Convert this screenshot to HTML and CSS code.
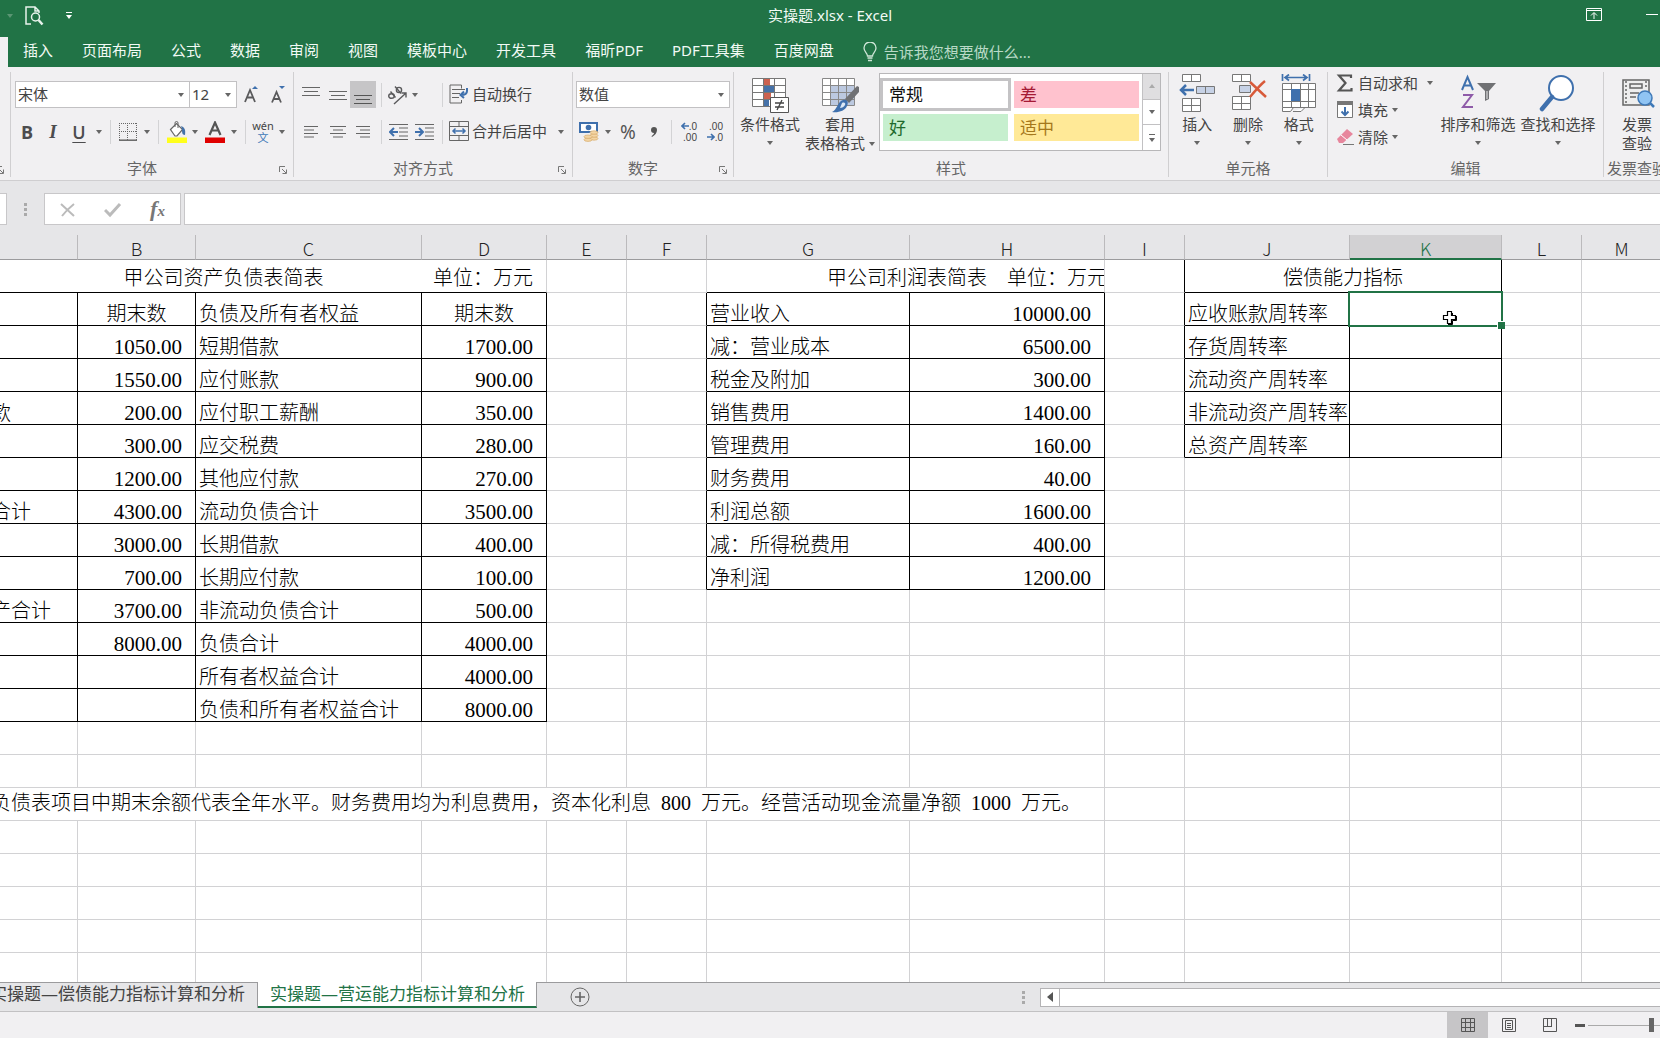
FILE: index.html
```html
<!DOCTYPE html>
<html lang="zh-CN">
<head>
<meta charset="utf-8">
<title>实操题.xlsx - Excel</title>
<link rel="stylesheet" href="styles.css">
</head>
<body>
<header class="titlebar">
  <div class="quick">
    <i class="caret dim"></i>
    <button class="plain" aria-label="打印预览"><svg width="20" height="20" viewBox="0 0 20 20" fill="none" stroke="#e8f3ec" stroke-width="1.5"><path d="M7 18H2V1h9l4 4v2M11 1v4h4"/><circle cx="11.500" cy="11" r="4"/><path d="M14.500 14l4 4.500" stroke-width="2.500"/></svg></button>
    <button class="plain more" aria-label="自定义快速访问工具栏"><i class="bar"></i><i class="caret light"></i></button>
  </div>
  <div class="doc">实操题.xlsx - Excel</div>
  <div class="winbtns">
    <button class="plain" aria-label="功能区显示选项"><svg width="16" height="13" viewBox="0 0 16 13" fill="none" stroke="#fff"><path d="M.5.5h15v12H.5zM.5 2.500h15M8 11V5M5 7.500L8 4.500l3 3"/></svg></button>
    <button class="plain" aria-label="最小化"><svg width="12" height="12" viewBox="0 0 12 12"><path d="M0 5.500h12" stroke="#fff"/></svg></button>
  </div>
</header>
<nav class="tabs">
  <span class="current"></span>
  <a href="#">插入</a><a href="#">页面布局</a><a href="#">公式</a><a href="#">数据</a><a href="#">审阅</a><a href="#">视图</a><a href="#">模板中心</a><a href="#">开发工具</a><a href="#">福昕PDF</a><a href="#">PDF工具集</a><a href="#">百度网盘</a>
  <label class="tell"><svg width="14" height="20" viewBox="0 0 14 20" fill="none" stroke="#cfe6d8" stroke-width="1.300"><path d="M4.500 14c0-3-3.500-4-3.500-8a6 6 0 0 1 12 0c0 4-3.500 5-3.500 8zM4.500 16h5M5 18.500h4"/></svg><input type="text" placeholder="告诉我您想要做什么..." aria-label="告诉我您想要做什么"></label>
</nav>

<section class="ribbon">
  <div class="group first"><div class="cap"><svg class="launch" width="8" height="8" viewBox="0 0 8 8"><path d="M.5 6V.5H6M3 3l4 4M7.500 3.500v4h-4" stroke="#777" fill="none"/></svg></div></div>

  <div class="group g-font">
    <div class="row font1">
      <label class="combo"><select aria-label="字体"><option>宋体</option></select><i class="caret"></i></label>
      <label class="combo"><select aria-label="字号"><option>12</option></select><i class="caret"></i></label>
      <button class="plain" aria-label="增大字号"><svg width="16" height="20" viewBox="0 0 16 20"><path d="M2 17L7 5l5 12M4 12.500h6" fill="none" stroke="#5a5a5c" stroke-width="1.800"/><path d="M9 4l3-3 3 3z" fill="#3f70ad"/></svg></button>
      <button class="plain" aria-label="减小字号"><svg width="16" height="20" viewBox="0 0 16 20"><path d="M2 17.500L6.500 7l4.500 10.500M3.500 14h6" fill="none" stroke="#5a5a5c" stroke-width="1.800"/><path d="M9 1h6l-3 3z" fill="#3f70ad"/></svg></button>
    </div>
    <div class="row font2">
      <button class="plain bold">B</button><button class="plain ital">I</button><button class="plain undl">U</button><i class="caret"></i><i class="sep"></i>
      <button class="plain" aria-label="边框"><svg width="18" height="18" viewBox="0 0 18 18" fill="none" stroke="#666"><path d="M.5 0v17M8.500 0v17M17.500 0v17M0 .5h18M0 8.500h18" stroke-dasharray="1 1"/><path d="M0 17.200h18" stroke-width="1.500"/></svg></button><i class="caret"></i><i class="sep"></i>
      <button class="plain" aria-label="填充颜色"><svg width="20" height="22" viewBox="0 0 20 22"><path d="M3.500 8.500l6-6 6 6-5.500 6.500H8z" fill="#fff" stroke="#666" stroke-width="1.200"/><path d="M8 6V2a1.500 1.500 0 0 1 3 0v5" fill="none" stroke="#666"/><path d="M14 5c3 1 5 3 4 9-3 0-3-3-3-6z" fill="#4472a8"/><path d="M0 16.500h20V22H0z" fill="#ffff1c"/></svg></button><i class="caret"></i>
      <button class="plain" aria-label="字体颜色"><svg width="20" height="22" viewBox="0 0 20 22"><path d="M4.500 14L10 1.500 15.500 14M6.500 9.500h7" fill="none" stroke="#555" stroke-width="2.200"/><path d="M0 16.500h20V22H0z" fill="#e00000"/></svg></button><i class="caret"></i><i class="sep"></i>
      <button class="plain pinyin"><span>wén</span><b>文</b></button><i class="caret"></i>
    </div>
    <div class="cap">字体<svg class="launch" width="8" height="8" viewBox="0 0 8 8"><path d="M.5 6V.5H6M3 3l4 4M7.500 3.500v4h-4" stroke="#777" fill="none"/></svg></div>
  </div>

  <div class="group g-align">
    <div class="row al1">
      <button class="plain" aria-label="顶端对齐"><svg width="18" height="24" viewBox="0 0 18 24"><path d="M0 4.500h18M2 8.500h14M0 12.500h18" stroke="#666"/></svg></button>
      <button class="plain" aria-label="垂直居中"><svg width="18" height="24" viewBox="0 0 18 24"><path d="M0 8.500h18M2 12.500h14M0 16.500h18" stroke="#666"/></svg></button>
      <button class="plain on" aria-label="底端对齐"><svg width="18" height="24" viewBox="0 0 18 24"><path d="M0 12.500h18M2 16.500h14M0 20.500h18" stroke="#555"/></svg></button>
      <i class="sep"></i>
      <button class="plain" aria-label="方向"><svg width="20" height="20" viewBox="0 0 20 20" fill="none" stroke="#5a5a5c" stroke-width="1.400"><ellipse cx="4.500" cy="11" rx="2.800" ry="2.300"/><path d="M3.500 6.500l5 6M8 1.500l6 7"/><ellipse cx="12" cy="5" rx="2.600" ry="2.600"/><path d="M7 19L18.500 8.500M14.500 8h4.500v4.500"/></svg></button><i class="caret"></i><i></i><i class="sep"></i>
      <button class="plain txt"><svg width="20" height="20" viewBox="0 0 20 20" fill="none" stroke="#666"><path d="M12.500 4.500V1H1v18h11.500v-3M3 5.500h13M3 9.500h8M3 13.500h7"/><path d="M18 4v3c0 3-2 4-6 4M15 7.500L11.500 11l3.500 3" stroke="#3f70ad" stroke-width="2"/></svg>自动换行</button>
    </div>
    <div class="row al2">
      <button class="plain" aria-label="左对齐"><svg width="16" height="14" viewBox="0 0 16 14"><path d="M1 1.500h14M1 5h10M1 8.500h14M1 12h10" stroke="#666"/></svg></button>
      <button class="plain" aria-label="居中"><svg width="16" height="14" viewBox="0 0 16 14"><path d="M0 1.500h16M3 5h10M0 8.500h16M3 12h10" stroke="#666"/></svg></button>
      <button class="plain" aria-label="右对齐"><svg width="16" height="14" viewBox="0 0 16 14"><path d="M1 1.500h14M5 5h10M1 8.500h14M5 12h10" stroke="#666"/></svg></button>
      <i class="sep"></i>
      <button class="plain" aria-label="减少缩进"><svg width="19" height="18" viewBox="0 0 19 18"><path d="M0 1.500h19M10 5h9M10 9h9M10 13h9M0 16.500h19" stroke="#666"/><path d="M9 9H2M5 5L1 9l4 4" fill="none" stroke="#3f70ad" stroke-width="2"/></svg></button>
      <button class="plain" aria-label="增加缩进"><svg width="19" height="18" viewBox="0 0 19 18"><path d="M0 1.500h19M10 5h9M10 9h9M10 13h9M0 16.500h19" stroke="#666"/><path d="M0 9h7M4 5l4 4-4 4" fill="none" stroke="#3f70ad" stroke-width="2"/></svg></button>
      <i class="sep"></i>
      <button class="plain txt"><svg width="20" height="20" viewBox="0 0 20 20" fill="none" stroke="#666"><path d="M.5.500h19v19H.5zM.5 5.500h19M.5 14.500h19M10 .5v5M10 14.500v5"/><path d="M4 10h12M6.500 7.500L4 10l2.500 2.500M13.500 7.500L16 10l-2.500 2.500" stroke="#3f70ad" stroke-width="1.500"/></svg>合并后居中</button><i class="caret"></i>
    </div>
    <div class="cap">对齐方式<svg class="launch" width="8" height="8" viewBox="0 0 8 8"><path d="M.5 6V.5H6M3 3l4 4M7.500 3.500v4h-4" stroke="#777" fill="none"/></svg></div>
  </div>

  <div class="group g-num">
    <div class="row num1"><label class="combo"><select aria-label="数字格式"><option>数值</option></select><i class="caret"></i></label></div>
    <div class="row num2">
      <button class="plain" aria-label="会计数字格式"><svg width="20" height="21" viewBox="0 0 20 21"><path d="M1 2h17v9H1z" fill="#fff" stroke="#3f70ad" stroke-width="2"/><circle cx="9.500" cy="6.500" r="2.800" fill="#3f70ad"/><g fill="#f3d5a5" stroke="#d8ac6c" stroke-width=".7"><ellipse cx="15" cy="17.500" rx="4" ry="1.700"/><ellipse cx="15" cy="14.500" rx="4" ry="1.700"/><ellipse cx="15" cy="11.500" rx="4" ry="1.700"/><ellipse cx="9" cy="18.700" rx="4" ry="1.700"/><ellipse cx="9" cy="15.700" rx="4" ry="1.700"/></g></svg></button><i class="caret"></i>
      <button class="plain pct">%</button><button class="plain comma" aria-label="千位分隔样式"><svg width="8" height="12" viewBox="0 0 8 12"><path d="M4 1a3 3 0 0 1 3 3c0 3-2 5-5 7l-.5-.8C3 9 4 8 4 7a3 3 0 0 1 0-6z" fill="#555"/></svg></button><i class="sep"></i>
      <button class="plain dec"><span><svg width="8" height="8" viewBox="0 0 8 8"><path d="M8 4H1.500M4 1L1 4l3 3" fill="none" stroke="#3f70ad" stroke-width="1.600"/></svg>.0</span><span>.00</span></button>
      <button class="plain dec"><span>.00</span><span><svg width="8" height="8" viewBox="0 0 8 8"><path d="M0 4h6.500M4 1l3 3-3 3" fill="none" stroke="#3f70ad" stroke-width="1.600"/></svg>.0</span></button>
    </div>
    <div class="cap">数字<svg class="launch" width="8" height="8" viewBox="0 0 8 8"><path d="M.5 6V.5H6M3 3l4 4M7.500 3.500v4h-4" stroke="#777" fill="none"/></svg></div>
  </div>

  <div class="group g-style">
    <div class="body">
      <button class="plain big cond"><svg width="38" height="38" viewBox="0 0 38 38"><path d="M1.500 3.500h33v28h-33z" fill="#fff"/><path d="M12 3h7v7h-7zM12 17h8v7h-8z" fill="#cc6250"/><path d="M12 10h11v7H12zM12 24h6v7h-6z" fill="#4672a9"/><path d="M1.500 3.500h33v28h-33zM1.500 10.500h33M1.500 17.500h33M1.500 24.500h33M12.500 3v28M23.500 3v28" fill="none" stroke="#777"/><path d="M19.500 22.500h18v15h-18z" fill="#fff" stroke="#555"/><path d="M24 28h9M24 32h9M31 25l-5 10" stroke="#444" stroke-width="1.300"/></svg><span>条件格式</span><i class="caret"></i></button>
      <button class="plain big two"><svg width="38" height="38" viewBox="0 0 38 38"><path d="M1.500 3.500h32v27h-32z" fill="#fff"/><path d="M9 10h25v20H9z" fill="#bcc9e0"/><path d="M1.500 3.500h32v27h-32zM1.500 10.500h32M1.500 17.500h32M1.500 24.500h32M9.500 3v28M17.500 3v28M25.500 3v28" fill="none" stroke="#888"/><path d="M36 11l2 1v5L28 28l-4-4z" fill="#707174"/><path d="M22 25c4-1 6 2 4 6-2 5-9 7-15 6 5-2 6-11 11-12z" fill="#3f70ad"/><path d="M21 28c2-1 4 0 3 2s-3 3-5 3z" fill="#dbe7f5"/></svg><span>套用</span><span class="drop">表格格式<i class="caret"></i></span></button>
      <div class="gallery">
        <div class="swatches"><button class="sw normal">常规</button><button class="sw bad">差</button><button class="sw good">好</button><button class="sw neutral">适中</button></div>
        <div class="gscroll"><button class="off" aria-label="上一行"><i class="caret up"></i></button><button aria-label="下一行"><i class="caret"></i></button><button aria-label="其他"><i class="bar dark"></i><i class="caret"></i></button></div>
      </div>
    </div>
    <div class="cap wide">样式</div>
  </div>

  <div class="group g-cells">
    <div class="body">
      <button class="plain big"><svg width="38" height="38" viewBox="0 0 38 38" fill="#fff" stroke="#777"><path d="M4.500.5h18v7h-18zM13.500.5v7M4.500 24.500h18v13h-18zM4.500 31.500h18M13.500 24.500v13"/><path d="M18.500 12.500h18v7h-18zM27.500 12.500v7" fill="#c7d2e6"/><path d="M16 16H3M8 11l-5 5 5 5" fill="none" stroke="#3f70ad" stroke-width="2.500"/></svg><span>插入</span><i class="caret"></i></button>
      <button class="plain big"><svg width="38" height="38" viewBox="0 0 38 38" fill="#fff" stroke="#777"><path d="M3.500.5h18v7h-18zM12.500.5v7M3.500 22.500h18v13h-18zM3.500 29.500h18M12.500 22.500v13"/><path d="M10.500 11.500h11v7h-11z" fill="#c7d2e6"/><path d="M21 8l16 15M36 7C31 11 26 17 21 23" fill="none" stroke="#d85a3a" stroke-width="2.500"/></svg><span>删除</span><i class="caret"></i></button>
      <button class="plain big"><svg width="38" height="38" viewBox="0 0 38 38" fill="#fff" stroke="#777"><path d="M2.500 9.500h33v24h-33zM2.500 15.500h33M2.500 27.500h33M11.500 9v24M20.500 9v24M28.500 9v24M2.500 33.500v4h8l3-4M13 37.500h8l4-4"/><path d="M11 15h9v12h-9z" fill="#3f70ad" stroke="none"/><path d="M2.500 0v7M29.500 0v7M5 3.500h22M9 .5L5 3.500l4 3M23 .5l4 3-4 3" fill="none" stroke="#3f70ad" stroke-width="1.700"/></svg><span>格式</span><i class="caret"></i></button>
    </div>
    <div class="cap wide">单元格</div>
  </div>

  <div class="group g-edit">
    <div class="body">
      <div class="stack">
        <button class="plain line"><svg width="18" height="18" viewBox="0 0 18 18"><path d="M15 4V1.500H3L9.500 9 3 16.500h12.500V14" fill="none" stroke="#555" stroke-width="2.200"/></svg>自动求和<i class="caret far"></i></button>
        <button class="plain line"><svg width="18" height="18" viewBox="0 0 18 18"><path d="M1.500 1.500h15v15h-15z" fill="#fff" stroke="#777"/><path d="M1 0h16v4H1z" fill="#777"/><path d="M9 6v8M5.500 10.500L9 14l3.500-3.500" fill="none" stroke="#3f70ad" stroke-width="2"/></svg>填充<i class="caret"></i></button>
        <button class="plain line"><svg width="18" height="18" viewBox="0 0 18 18"><path d="M1 11L11 1l6 5L7 15H3z" fill="#e7869d"/><path d="M5 7l6 5" stroke="#fff"/><path d="M7 16.500h11" stroke="#777"/></svg>清除<i class="caret"></i></button>
      </div>
      <button class="plain big"><svg width="38" height="38" viewBox="0 0 38 38" fill="none"><path d="M3 16L8.500 3 14 16M5 11.500h7" stroke="#3f70ad" stroke-width="2"/><path d="M4 21h9L4 33h10" stroke="#8e5ba8" stroke-width="2"/><path d="M18 9h19l-7 8v8l-4 2V17z" fill="#707174"/><path d="M28 17v8" stroke="#eee"/></svg><span>排序和筛选</span><i class="caret"></i></button>
      <button class="plain big"><svg width="38" height="38" viewBox="0 0 38 38" fill="none" stroke="#3f70ad"><circle cx="22" cy="14" r="12" fill="#fff" stroke-width="2"/><path d="M13 23L3 35" stroke-width="4.500" stroke-linecap="round"/></svg><span>查找和选择</span><i class="caret"></i></button>
    </div>
    <div class="cap wide">编辑</div>
  </div>

  <div class="group g-inv">
    <div class="body">
      <button class="plain big"><svg width="38" height="38" viewBox="0 0 38 38" fill="none" stroke="#666" stroke-width="1.500"><path d="M5 6h26v25H5z" fill="#eee"/><path d="M8 7v23M28 7v8" stroke-dasharray="2 2"/><path d="M12 10h12v4H12zM12 19h9M12 23h6"/><circle cx="27" cy="24" r="7" fill="#90c4f3" stroke="#3f79b8"/><path d="M32 29l4 4" stroke="#3f79b8" stroke-width="2.500"/></svg><span>发票</span><span>查验</span></button>
    </div>
    <div class="cap wide">发票查验</div>
  </div>
</section>

<section class="formula">
  <div class="namebox"></div>
  <div class="dots"><i></i><i></i><i></i></div>
  <div class="fxbox">
    <button class="plain" aria-label="取消"><svg width="16" height="16" viewBox="0 0 16 16"><path d="M1 2l13 12M14 2C9 6 5 10 2 14" fill="none" stroke="#bbb" stroke-width="2"/></svg></button>
    <button class="plain" aria-label="输入"><svg width="18" height="16" viewBox="0 0 18 16"><path d="M1 8l5 5L16 2" fill="none" stroke="#bbb" stroke-width="3"/></svg></button>
    <button class="plain fx">f<small>x</small></button>
  </div>
  <input class="finput" type="text" aria-label="编辑栏">
</section>

<main class="sheet">
<table>
<colgroup><col class="ca"><col class="cb"><col class="cc"><col class="cd"><col class="ce"><col class="ce"><col class="cg"><col class="ch"><col class="ce"><col class="cj"><col class="ck"><col class="ce"><col></colgroup>
<thead><tr><th scope="col"></th><th scope="col">B</th><th scope="col">C</th><th scope="col">D</th><th scope="col">E</th><th scope="col">F</th><th scope="col">G</th><th scope="col">H</th><th scope="col">I</th><th scope="col">J</th><th scope="col" class="sel">K</th><th scope="col">L</th><th scope="col">M</th></tr></thead>
<tbody>
<tr class="mid head"><td colspan="3" class="kb nr title">甲公司资产负债表简表</td><td class="kb n">单位：万元</td><td></td><td></td><td colspan="2" class="kb profit">甲公司利润表简表　单位：万元</td><td class="kr"></td><td colspan="2" class="k c">偿债能力指标</td><td></td><td></td></tr>
<tr><td class="k"></td><td class="k c">期末数</td><td class="k">负债及所有者权益</td><td class="k c">期末数</td><td></td><td class="kr"></td><td class="k">营业收入</td><td class="k n">10000.00</td><td class="kr"></td><td class="k">应收账款周转率</td><td class="k active"><svg class="cursor" width="16" height="16" viewBox="0 0 16 16"><path d="M5.500 1.500h4v4h4v4h-4v4h-4v-4h-4v-4h4z" fill="#fff" stroke="#000" stroke-width="1.200"/><path d="M10.500 3v2M14.500 6v4.500h-4v4H6" fill="none" stroke="#000"/></svg></td><td></td><td></td></tr>
<tr><td class="k"></td><td class="k n">1050.00</td><td class="k">短期借款</td><td class="k n">1700.00</td><td></td><td class="kr"></td><td class="k">减：营业成本</td><td class="k n">6500.00</td><td class="kr"></td><td class="k">存货周转率</td><td class="k"></td><td></td><td></td></tr>
<tr><td class="k"></td><td class="k n">1550.00</td><td class="k">应付账款</td><td class="k n">900.00</td><td></td><td class="kr"></td><td class="k">税金及附加</td><td class="k n">300.00</td><td class="kr"></td><td class="k">流动资产周转率</td><td class="k"></td><td></td><td></td></tr>
<tr><td class="k">款</td><td class="k n">200.00</td><td class="k">应付职工薪酬</td><td class="k n">350.00</td><td></td><td class="kr"></td><td class="k">销售费用</td><td class="k n">1400.00</td><td class="kr"></td><td class="k">非流动资产周转率</td><td class="k"></td><td></td><td></td></tr>
<tr><td class="k"></td><td class="k n">300.00</td><td class="k">应交税费</td><td class="k n">280.00</td><td></td><td class="kr"></td><td class="k">管理费用</td><td class="k n">160.00</td><td class="kr"></td><td class="k">总资产周转率</td><td class="k"></td><td></td><td></td></tr>
<tr><td class="k"></td><td class="k n">1200.00</td><td class="k">其他应付款</td><td class="k n">270.00</td><td></td><td class="kr"></td><td class="k">财务费用</td><td class="k n">40.00</td><td></td><td></td><td></td><td></td><td></td></tr>
<tr><td class="k">合计</td><td class="k n">4300.00</td><td class="k">流动负债合计</td><td class="k n">3500.00</td><td></td><td class="kr"></td><td class="k">利润总额</td><td class="k n">1600.00</td><td></td><td></td><td></td><td></td><td></td></tr>
<tr><td class="k"></td><td class="k n">3000.00</td><td class="k">长期借款</td><td class="k n">400.00</td><td></td><td class="kr"></td><td class="k">减：所得税费用</td><td class="k n">400.00</td><td></td><td></td><td></td><td></td><td></td></tr>
<tr><td class="k"></td><td class="k n">700.00</td><td class="k">长期应付款</td><td class="k n">100.00</td><td></td><td class="kr"></td><td class="k">净利润</td><td class="k n">1200.00</td><td></td><td></td><td></td><td></td><td></td></tr>
<tr><td class="k">产合计</td><td class="k n">3700.00</td><td class="k">非流动负债合计</td><td class="k n">500.00</td><td></td><td></td><td></td><td></td><td></td><td></td><td></td><td></td><td></td></tr>
<tr><td class="k"></td><td class="k n">8000.00</td><td class="k">负债合计</td><td class="k n">4000.00</td><td></td><td></td><td></td><td></td><td></td><td></td><td></td><td></td><td></td></tr>
<tr><td class="k"></td><td class="k"></td><td class="k">所有者权益合计</td><td class="k n">4000.00</td><td></td><td></td><td></td><td></td><td></td><td></td><td></td><td></td><td></td></tr>
<tr><td class="k"></td><td class="k"></td><td class="k">负债和所有者权益合计</td><td class="k n">8000.00</td><td></td><td></td><td></td><td></td><td></td><td></td><td></td><td></td><td></td></tr>
<tr><td></td><td></td><td></td><td></td><td></td><td></td><td></td><td></td><td></td><td></td><td></td><td></td><td></td></tr>
<tr><td></td><td></td><td></td><td></td><td></td><td></td><td></td><td></td><td></td><td></td><td></td><td></td><td></td></tr>
<tr class="mid note"><td colspan="8">负债表项目中期末余额代表全年水平。财务费用均为利息费用，资本化利息&nbsp; 800&nbsp; 万元。经营活动现金流量净额&nbsp; 1000&nbsp; 万元。</td><td></td><td></td><td></td><td></td><td></td></tr>
<tr><td></td><td></td><td></td><td></td><td></td><td></td><td></td><td></td><td></td><td></td><td></td><td></td><td></td></tr>
<tr><td></td><td></td><td></td><td></td><td></td><td></td><td></td><td></td><td></td><td></td><td></td><td></td><td></td></tr>
<tr><td></td><td></td><td></td><td></td><td></td><td></td><td></td><td></td><td></td><td></td><td></td><td></td><td></td></tr>
<tr><td></td><td></td><td></td><td></td><td></td><td></td><td></td><td></td><td></td><td></td><td></td><td></td><td></td></tr>
<tr><td></td><td></td><td></td><td></td><td></td><td></td><td></td><td></td><td></td><td></td><td></td><td></td><td></td></tr>
</tbody>
</table>
</main>

<footer>
  <div class="sheettabs">
    <div class="leftpart">
      <button class="stab"><span>实操题—偿债能力指标计算和分析</span></button>
      <button class="stab cur">实操题—营运能力指标计算和分析</button>
      <button class="plain add" aria-label="新工作表"><svg width="20" height="20" viewBox="0 0 20 20" fill="none" stroke="#666"><circle cx="10" cy="10" r="9"/><path d="M10 5v10M5 10h10" stroke-width="1.600"/></svg></button>
    </div>
    <div class="rightpart">
      <div class="dots"><i></i><i></i><i></i></div>
      <div class="hscroll"><button aria-label="向左滚动"><svg width="6" height="10" viewBox="0 0 6 10"><path d="M6 0v10L0 5z" fill="#555"/></svg></button></div>
    </div>
  </div>
  <div class="status">
    <button class="plain view on" aria-label="普通"><svg width="14" height="14" viewBox="0 0 14 14" fill="none" stroke="#555"><path d="M.5.5h13v13H.5zM.5 4.500h13M.5 9.500h13M4.500.5v13M9.500.5v13"/></svg></button>
    <button class="plain view" aria-label="页面布局"><svg width="14" height="14" viewBox="0 0 14 14" fill="none" stroke="#555"><path d="M.5.5h13v13H.5zM3.500 2.500h7v9h-7zM5 5.500h4M5 7.500h4M5 9.500h4"/></svg></button>
    <button class="plain view" aria-label="分页预览"><svg width="14" height="14" viewBox="0 0 14 14" fill="none" stroke="#555"><path d="M.5.5h13v13H.5zM4.500.5v8M8.500.5v8M0 8.500h9"/></svg></button>
    <button class="plain minus" aria-label="缩小"><svg width="10" height="3" viewBox="0 0 10 3"><path d="M0 0h10v3H0z" fill="#555"/></svg></button>
    <input class="zoom" type="range" min="0" max="100" value="50" aria-label="缩放">
  </div>
</footer>
</body>
</html>
```
FILE: styles.css
```css
* { box-sizing: border-box; }
:root {
  --green: #217346;
  --ui: "Noto Sans", "Noto Sans CJK SC", sans-serif;
  --line: #d2d2d4;
  --chrome: #e6e6e8;
  --pale: #f1f0f2;
}
body {
  margin: 0;
  height: 100vh;
  display: flex;
  flex-direction: column;
  overflow: hidden;
  background: #fff;
  color: #444;
  font: 15px/20px var(--ui);
}
button, input, select { font: inherit; color: inherit; }
.plain {
  border: 0;
  padding: 0;
  background: none;
  display: flex;
  align-items: center;
  justify-content: center;
  white-space: nowrap;
}
svg { flex: none; display: block; }
.caret {
  width: 0;
  height: 0;
  flex: none;
  border: 3px solid transparent;
  border-top: 4px solid #666;
  border-bottom: 0;
  justify-self: center;
  align-self: center;
}
.caret.up { border-top: 0; border-bottom: 4px solid #aaa; }
.caret.light { border-top-color: #fff; }
.caret.dim { border-top-color: #5b9674; }
.bar { width: 6px; height: 1px; background: #fff; }
.bar.dark { background: #666; }

/* title bar */
.titlebar {
  height: 37px;
  flex: none;
  display: grid;
  grid-template-columns: 1fr auto 1fr;
  align-items: center;
  background: var(--green);
  color: #f2faf5;
}
.quick { display: flex; align-items: center; padding-left: 7px; padding-bottom: 6px; }
.quick .plain { margin-left: 11px; }
.quick .more { flex-direction: column; gap: 2px; margin-left: 22px; }
.doc { padding-bottom: 8px; }
.winbtns { display: flex; justify-content: flex-end; gap: 44px; align-items: center; padding: 0 2px 8px 0; }

/* ribbon tabs */
.tabs {
  height: 30px;
  flex: none;
  display: flex;
  align-items: center;
  gap: 29px;
  background: var(--green);
  color: #f2faf5;
  white-space: nowrap;
}
.tabs a { color: inherit; text-decoration: none; padding-bottom: 4px; }
.tabs .current { width: 8px; height: 30px; background: var(--pale); margin-right: -14px; }
.tell { display: flex; align-items: center; gap: 7px; }
.tell input { border: 0; padding: 0 0 1px; width: 180px; background: none; }
.tell input::placeholder { color: #b9dac7; opacity: 1; }

/* ribbon */
.ribbon {
  height: 114px;
  flex: none;
  display: flex;
  padding: 5px 0 3px;
  overflow: hidden;
  background: var(--pale);
  border-bottom: 1px solid #cfced0;
}
.group {
  flex: none;
  display: flex;
  flex-direction: column;
  padding: 9px 3px 0;
  border-right: 1px solid #d0cfd1;
}
.first { width: 11px; padding: 0; }
.g-font { width: 283px; }
.g-align { width: 279px; }
.g-num { width: 161px; }
.g-style { width: 435px; }
.g-cells { width: 159px; }
.g-edit { width: 276px; }
.g-inv { width: 120px; border: 0; }
.cap {
  margin-top: auto;
  display: flex;
  align-items: center;
  justify-content: center;
  position: relative;
  height: 18px;
  padding-right: 20px;
  color: #666;
  white-space: nowrap;
}
.cap.wide, .first .cap { padding: 0; }
.g-inv .cap { justify-content: flex-start; }
.launch { position: absolute; right: 3px; bottom: 3px; }
.first .launch { right: 6px; }
.row { display: grid; height: 27px; margin-bottom: 10px; }
.row > .plain { height: 27px; }
.sep { width: 1px; height: 24px; background: #d3d3d5; justify-self: center; align-self: center; }
.font1 { grid-template-columns: 176px 47px 28px 25px; }
.font2 { grid-template-columns: 26px 26px 26px 14px 8px 28px 10px 12px 26px 10px 30px 8px 14px 22px 16px; }
.al1 { grid-template-columns: 28px 25px 26px 10px 22px 14px 15px 10px 1fr; }
.al2 { grid-template-columns: 28px 25px 26px 10px 25px 26px 10px 102px 24px; }
.num1 { grid-template-columns: 1fr; }
.num2 { grid-template-columns: 26px 12px 28px 24px 10px 26px 26px; }
.combo { position: relative; display: flex; background: #fff; border: 1px solid #c2c1c3; }
.font1 .combo { margin-left: 1px; }
.font1 .combo + .combo { margin-left: -1px; }
.combo select { appearance: none; border: 0; background: none; width: 100%; padding: 0 2px 2px; }
.combo .caret { position: absolute; right: 5px; top: 11px; }
.on { background: #c6c5c7; }
.txt { justify-content: flex-start; gap: 3px; padding: 0 0 2px 2px; }
.bold, .undl { font: bold 18px/24px "Open Sans", sans-serif; color: #4c4c4e; }
.undl { text-decoration: underline; font-weight: 600; text-underline-offset: 3px; }
.ital { font: italic bold 19px/24px "Liberation Serif", serif; color: #4c4c4e; }
.pinyin { flex-direction: column; font-size: 11px; line-height: 11px; }
.pinyin b { color: #3f79b8; font-weight: 400; line-height: 13px; }
.pct { font-size: 19px; color: #555; }
.dec { flex-direction: column; align-items: flex-end; padding-right: 5px; font: 10px/11px "Liberation Sans", sans-serif; }
.dec span { display: flex; align-items: center; }
.body { display: flex; }
.big { flex-direction: column; justify-content: flex-start; height: 80px; width: 74px; }
.cond { width: 66px; }
.big svg { margin-bottom: 3px; }
.big span { line-height: 19px; height: 19px; }
.big > .caret { margin-top: 7px; }
.drop { display: flex; gap: 4px; }
.g-style, .g-cells, .g-edit, .g-inv { padding-top: 0; }
.g-style .big { padding-top: 3px; }
.g-style .big svg { margin-bottom: 2px; }
.g-cells .big { width: 51px; padding-top: 2px; }
.g-edit .big { width: 80px; padding-top: 2px; }
.g-inv .big { width: 60px; padding-top: 2px; }
.stack { display: flex; flex-direction: column; width: 107px; padding-left: 5px; }
.line { height: 27px; justify-content: flex-start; gap: 4px; padding-bottom: 5px; }
.line .far { margin-left: 5px; }
.gallery { display: flex; width: 282px; height: 78px; margin: 1px 0 0 2px; background: #fff; border: 1px solid #b8b7b9; }
.swatches { flex: 1; display: grid; grid-template-columns: 125px 125px; grid-template-rows: 27px 27px; gap: 6px; padding: 7px 0 0 3px; }
.sw { border: 0; padding: 0 6px; text-align: left; font-size: 17px; }
.normal { background: #fff; color: #111; outline: 3px solid #c4c3c5; }
.bad { background: #ffc2ce; color: #a51a35; }
.good { background: #c6efce; color: #1f6a2c; }
.neutral { background: #ffe997; color: #a5781c; }
.gscroll { width: 18px; display: flex; flex-direction: column; border-left: 1px solid #c2c1c3; }
.gscroll button { flex: 1; border: 0; border-bottom: 1px solid #c2c1c3; padding: 0; background: #fff; display: flex; flex-direction: column; align-items: center; justify-content: center; gap: 3px; }
.gscroll button:last-child { border: 0; }
.gscroll .off { background: #dfdee0; }
.gscroll .caret { align-self: center; }

/* formula bar */
.formula {
  flex: none;
  height: 54px;
  display: flex;
  padding: 12px 0 10px;
  background: var(--chrome);
}
.namebox { width: 7px; background: #fff; border: 1px solid #c8c7c9; border-left: 0; }
.dots { width: 37px; display: flex; flex-direction: column; align-items: center; justify-content: center; gap: 2px; }
.dots i { width: 3px; height: 3px; background: #aaa; }
.fxbox { width: 137px; display: grid; grid-template-columns: 1fr 1fr 1fr; background: #fff; border: 1px solid #c8c7c9; }
.fx { font: italic bold 22px/24px "Liberation Serif", serif; color: #777; padding-bottom: 3px; }
.fx small { font-size: 15px; padding-top: 5px; }
.finput { flex: 1; min-width: 0; margin-left: 3px; border: 1px solid #c8c7c9; border-right: 0; background: #fff; }

/* worksheet */
.sheet { flex: 1; min-height: 0; overflow: hidden; }
table {
  table-layout: fixed;
  width: calc(100% + 14px);
  margin-left: -12px;
  border-collapse: separate;
  border-spacing: 0;
  font: 300 20px/22px "Liberation Serif", "Noto Sans CJK SC", serif;
  color: #000;
}
.ca { width: 90px; }
.cb { width: 118px; }
.cc { width: 226px; }
.cd { width: 125px; }
.ce { width: 80px; }
.cg { width: 203px; }
.ch { width: 195px; }
.cj { width: 165px; }
.ck { width: 152px; }
th {
  height: 25px;
  padding: 2px 0 0;
  background: var(--chrome);
  border-right: 1px solid #bbbabc;
  border-bottom: 1px solid #9b9b9d;
  font: 300 18px/20px "Noto Sans CJK SC", sans-serif;
  color: #222;
}
th.sel { background: #d2d1d3; color: var(--green); border-bottom: 2px solid var(--green); }
td {
  height: 33px;
  padding: 0 3px;
  border-right: 1px solid var(--line);
  border-bottom: 1px solid var(--line);
  vertical-align: bottom;
  white-space: nowrap;
}
.mid td { vertical-align: middle; }
.head td { padding-top: 3px; }
.note td { padding-bottom: 2px; }
.kr, .k { border-right-color: #000; }
.kb, .k { border-bottom-color: #000; }
.nr { border-right: 0; }
.c { text-align: center; }
.n { text-align: right; padding-right: 13px; font-size: 21px; }
.mid .n { font-size: 20px; }
.title { text-align: center; padding-left: 40px; }
.profit { padding-left: 120px; padding-right: 0; overflow: hidden; }
.active { position: relative; }
.active::before { content: ""; position: absolute; inset: -2px; border: 2px solid var(--green); }
.active::after { content: ""; position: absolute; right: -4px; bottom: -4px; width: 7px; height: 7px; background: var(--green); border: solid #fff; border-width: 1px 0 0 1px; }
.cursor { position: absolute; left: 92px; top: 17px; }

/* sheet tabs and status bar */
.sheettabs {
  height: 30px;
  display: flex;
  justify-content: space-between;
  background: var(--chrome);
  border-top: 1px solid #9b9b9d;
  border-bottom: 1px solid #c2c1c3;
}
.leftpart { display: flex; align-items: flex-start; }
.stab { height: 25px; border: 0; padding: 0 12px; background: none; font-size: 17px; line-height: 22px; white-space: nowrap; }
.stab:first-child { width: 258px; display: flex; justify-content: flex-end; overflow: hidden; border-right: 1px solid #9b9b9d; }
.cur { width: 279px; height: 26px; margin-top: -1px; background: #fff; color: var(--green); border-bottom: 2px solid var(--green); border-right: 1px solid #9b9b9d; }
.add { margin: 4px 0 0 33px; }
.rightpart { width: 640px; display: flex; align-items: center; }
.rightpart .dots { width: 21px; margin-left: -7px; margin-right: 6px; }
.hscroll { flex: 1; height: 19px; background: #fff; border: 1px solid #b4b3b5; border-right: 0; display: flex; }
.hscroll button { width: 19px; border: 0; border-right: 1px solid #b4b3b5; background: none; padding: 0; display: flex; align-items: center; justify-content: center; }
.status { height: 26px; display: flex; justify-content: flex-end; overflow: hidden; background: var(--pale); }
.view { width: 41px; }
.minus { width: 10px; margin: 0 3px 0 5px; }
.zoom { appearance: none; width: 126px; height: 26px; margin: 0 -54px 0 0; background: linear-gradient(#aaa, #aaa) center / 100% 1px no-repeat; }
.zoom::-webkit-slider-thumb { appearance: none; width: 5px; height: 14px; background: #666; }
```
